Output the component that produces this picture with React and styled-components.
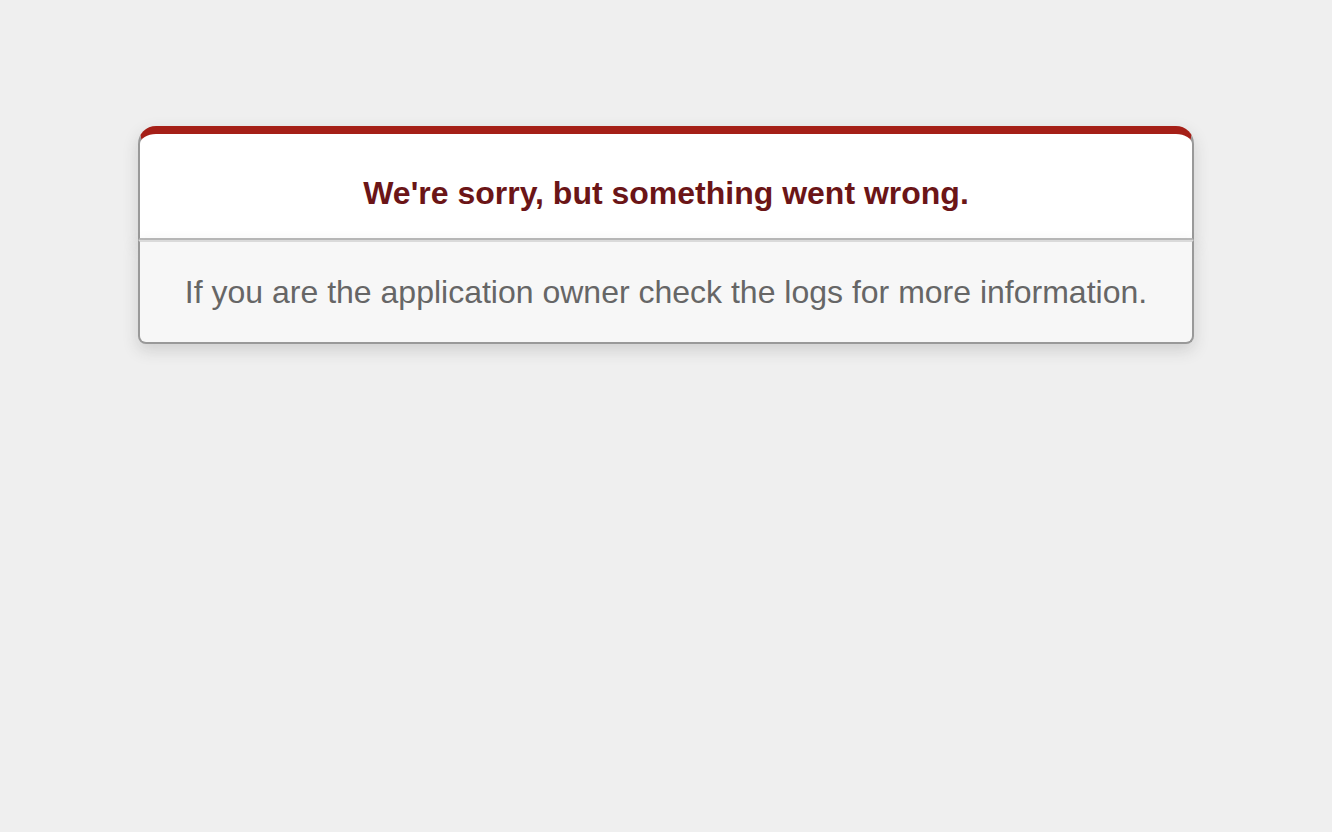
import React from "react";
import styled, { createGlobalStyle } from "styled-components";

const GlobalStyle = createGlobalStyle`
  html, body {
    margin: 0;
    background-color: #efefef;
  }
  body {
    color: #2e2f30;
    text-align: center;
    font-family: "Liberation Sans", Arial, sans-serif;
  }
`;

const Dialog = styled.div`
  width: 95%;
  max-width: 1056px;
  margin: 126px auto 0;
`;

const Header = styled.div`
  border: 2px solid #ccc;
  border-right-color: #999;
  border-left-color: #999;
  border-bottom-color: #bbb;
  border-top: 8px solid #a51f17;
  border-top-left-radius: 18px;
  border-top-right-radius: 18px;
  background-color: #fff;
  padding: 14px 12% 0;
  box-shadow: 0 6px 16px rgba(50, 50, 50, 0.17);
`;

const Title = styled.h1`
  font-size: 32px;
  font-weight: bold;
  color: #6b1517;
  line-height: 48px;
  margin: 21px 0;
`;

const Message = styled.p`
  margin: 0 0 32px;
  padding: 32px 32px 31px;
  font-size: 32px;
  background-color: #f7f7f7;
  border: 2px solid #ccc;
  border-right-color: #999;
  border-left-color: #999;
  border-bottom-color: #999;
  border-top-color: #dadada;
  border-bottom-left-radius: 8px;
  border-bottom-right-radius: 8px;
  color: #666;
  box-shadow: 0 6px 16px rgba(50, 50, 50, 0.17);
`;

export default function App() {
  return (
    <>
      <GlobalStyle />
      <Dialog>
        <Header>
          <Title>We're sorry, but something went wrong.</Title>
        </Header>
        <Message>If you are the application owner check the logs for more information.</Message>
      </Dialog>
    </>
  );
}
